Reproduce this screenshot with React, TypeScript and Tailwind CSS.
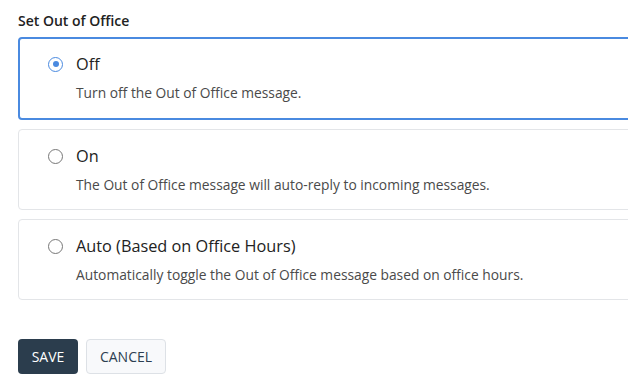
import { useState } from 'react'

const options = [
  { id: 'off', label: 'Off', description: 'Turn off the Out of Office message.' },
  { id: 'on', label: 'On', description: 'The Out of Office message will auto-reply to incoming messages.' },
  {
    id: 'auto',
    label: 'Auto (Based on Office Hours)',
    description: 'Automatically toggle the Out of Office message based on office hours.',
  },
]

export default function App() {
  const [selected, setSelected] = useState('off')

  return (
    <div
      className="w-[628px] h-[386px] overflow-hidden bg-white text-[#222]"
      style={{ fontFamily: '"Open Sans", "Noto Sans", sans-serif' }}
    >
      <div className="w-[700px] pl-[18px] pt-[11px]">
        <p className="text-[14px] font-semibold leading-[20px] mb-[6px] text-[#222]">Set Out of Office</p>

        <div className="flex flex-col gap-[9px]">
          {options.map(o => {
            const active = selected === o.id
            return (
              <label
                key={o.id}
                onClick={() => setSelected(o.id)}
                className={`block cursor-pointer rounded-[4px] bg-white ${
                  active
                    ? 'border-2 border-[#4a8ae0] h-[83px] pl-[28px] pt-[13px]'
                    : 'border border-[#e3e5e8] h-[81px] pl-[29px] pt-[14px]'
                }`}
              >
                <div className="flex items-center h-[24px]">
                  <span
                    className={`flex items-center justify-center w-[15px] h-[15px] rounded-full border-[1.5px] ${
                      active ? 'border-[#4a8ae0]' : 'border-[#777]'
                    }`}
                  >
                    {active && <span className="w-[6px] h-[6px] rounded-full bg-[#4a8ae0]" />}
                  </span>
                  <span className="ml-[13px] text-[16.3px] text-[#222]">{o.label}</span>
                </div>
                <p className="mt-[7px] ml-[28px] text-[13.8px] leading-[20px] text-[#4a4a4a]">{o.description}</p>
              </label>
            )
          })}
        </div>

        <div className="flex gap-[8px] mt-[39px]">
          <button className="h-[35px] w-[60px] rounded-[4px] bg-[#2b3d4d] text-white text-[14px] font-medium">
            SAVE
          </button>
          <button className="h-[35px] w-[80px] rounded-[4px] border border-[#dde1e6] bg-[#f8f9fb] text-[#2c3e50] text-[14px]">
            CANCEL
          </button>
        </div>
      </div>
    </div>
  )
}
